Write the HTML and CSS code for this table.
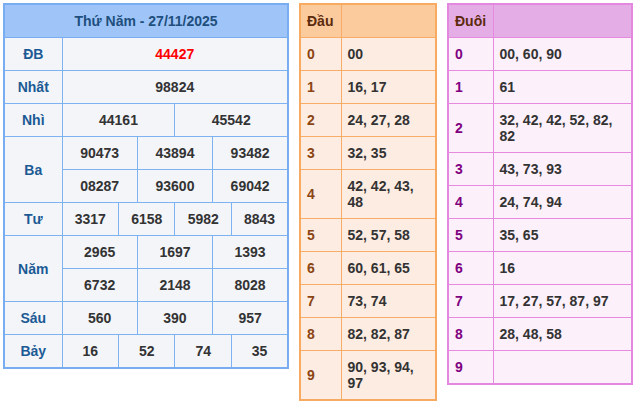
FILE: index.html
```html
<!DOCTYPE html>
<html lang="vi">
<head>
<meta charset="utf-8">
<title>Kết quả xổ số</title>
<link rel="stylesheet" href="styles.css">
</head>
<body>
<div class="wrap">
  <table class="kq">
    <colgroup>
      <col class="c-label">
      <col><col><col><col><col><col><col><col><col><col><col><col>
    </colgroup>
    <thead>
      <tr><th colspan="13" class="title">Thứ Năm - 27/11/2025</th></tr>
    </thead>
    <tbody>
      <tr><td class="lbl">ĐB</td><td colspan="12" class="db">44427</td></tr>
      <tr><td class="lbl">Nhất</td><td colspan="12">98824</td></tr>
      <tr><td class="lbl">Nhì</td><td colspan="6">44161</td><td colspan="6">45542</td></tr>
      <tr><td class="lbl" rowspan="2">Ba</td><td colspan="4">90473</td><td colspan="4">43894</td><td colspan="4">93482</td></tr>
      <tr><td colspan="4">08287</td><td colspan="4">93600</td><td colspan="4">69042</td></tr>
      <tr><td class="lbl">Tư</td><td colspan="3">3317</td><td colspan="3">6158</td><td colspan="3">5982</td><td colspan="3">8843</td></tr>
      <tr><td class="lbl" rowspan="2">Năm</td><td colspan="4">2965</td><td colspan="4">1697</td><td colspan="4">1393</td></tr>
      <tr><td colspan="4">6732</td><td colspan="4">2148</td><td colspan="4">8028</td></tr>
      <tr><td class="lbl">Sáu</td><td colspan="4">560</td><td colspan="4">390</td><td colspan="4">957</td></tr>
      <tr><td class="lbl">Bảy</td><td colspan="3">16</td><td colspan="3">52</td><td colspan="3">74</td><td colspan="3">35</td></tr>
    </tbody>
  </table>

  <table class="lt dau">
    <colgroup><col class="c-k"><col></colgroup>
    <thead><tr><th>Đầu</th><th></th></tr></thead>
    <tbody>
      <tr><td class="k">0</td><td>00</td></tr>
      <tr><td class="k">1</td><td>16, 17</td></tr>
      <tr><td class="k">2</td><td>24, 27, 28</td></tr>
      <tr><td class="k">3</td><td>32, 35</td></tr>
      <tr><td class="k">4</td><td>42, 42, 43, 48</td></tr>
      <tr><td class="k">5</td><td>52, 57, 58</td></tr>
      <tr><td class="k">6</td><td>60, 61, 65</td></tr>
      <tr><td class="k">7</td><td>73, 74</td></tr>
      <tr><td class="k">8</td><td>82, 82, 87</td></tr>
      <tr><td class="k">9</td><td>90, 93, 94, 97</td></tr>
    </tbody>
  </table>

  <table class="lt duoi">
    <colgroup><col class="c-k"><col></colgroup>
    <thead><tr><th>Đuôi</th><th></th></tr></thead>
    <tbody>
      <tr><td class="k">0</td><td>00, 60, 90</td></tr>
      <tr><td class="k">1</td><td>61</td></tr>
      <tr><td class="k">2</td><td>32, 42, 42, 52, 82, 82</td></tr>
      <tr><td class="k">3</td><td>43, 73, 93</td></tr>
      <tr><td class="k">4</td><td>24, 74, 94</td></tr>
      <tr><td class="k">5</td><td>35, 65</td></tr>
      <tr><td class="k">6</td><td>16</td></tr>
      <tr><td class="k">7</td><td>17, 27, 57, 87, 97</td></tr>
      <tr><td class="k">8</td><td>28, 48, 58</td></tr>
      <tr><td class="k">9</td><td></td></tr>
    </tbody>
  </table>
</div>
</body>
</html>
```

FILE: styles.css
```css
html, body {
  margin: 0;
  padding: 0;
  background: #ffffff;
}

body {
  font-family: "Liberation Sans", Arial, sans-serif;
  font-size: 14px;
  font-weight: bold;
  color: #333333;
}

.wrap {
  display: flex;
  align-items: flex-start;
  gap: 10px;
  padding: 3px;
}

table {
  border-collapse: collapse;
  table-layout: fixed;
}

td, th {
  padding: 8px 6px;
  line-height: 16px;
  height: 16px;
  font-weight: bold;
}

/* Main results table */
.kq {
  width: 286px;
  border: 2px solid #78adf1;
  background: #f3f5f9;
}

.kq .c-label {
  width: 58px;
}

.kq td, .kq th {
  border: 1px solid #7db2f3;
  text-align: center;
  padding: 8px 0;
  color: #333333;
}

.kq .title {
  background: #9fc5f8;
  color: #1e4f7d;
  border-color: #78adf1;
}

.kq .lbl {
  color: #1b5a94;
}

.kq .db {
  color: #ff0000;
}

/* Loto tables */
.lt td, .lt th {
  text-align: left;
}

.lt th {
  color: #5c2a0c;
}

.dau {
  width: 138px;
  border: 2px solid #f7aa62;
  background: #fdece1;
}

.dau .c-k {
  width: 41px;
}

.dau td, .dau th {
  border: 1px solid #f7ad68;
}

.dau th {
  background: #fbcb9e;
}

.dau .k {
  color: #8b4513;
}

.duoi {
  width: 186px;
  border: 2px solid #e487df;
  background: #fcf0fa;
}

.duoi .c-k {
  width: 45px;
}

.duoi td, .duoi th {
  border: 1px solid #e68ae0;
}

.duoi th {
  background: #e5ade6;
}

.duoi .k {
  color: #800080;
}
```
